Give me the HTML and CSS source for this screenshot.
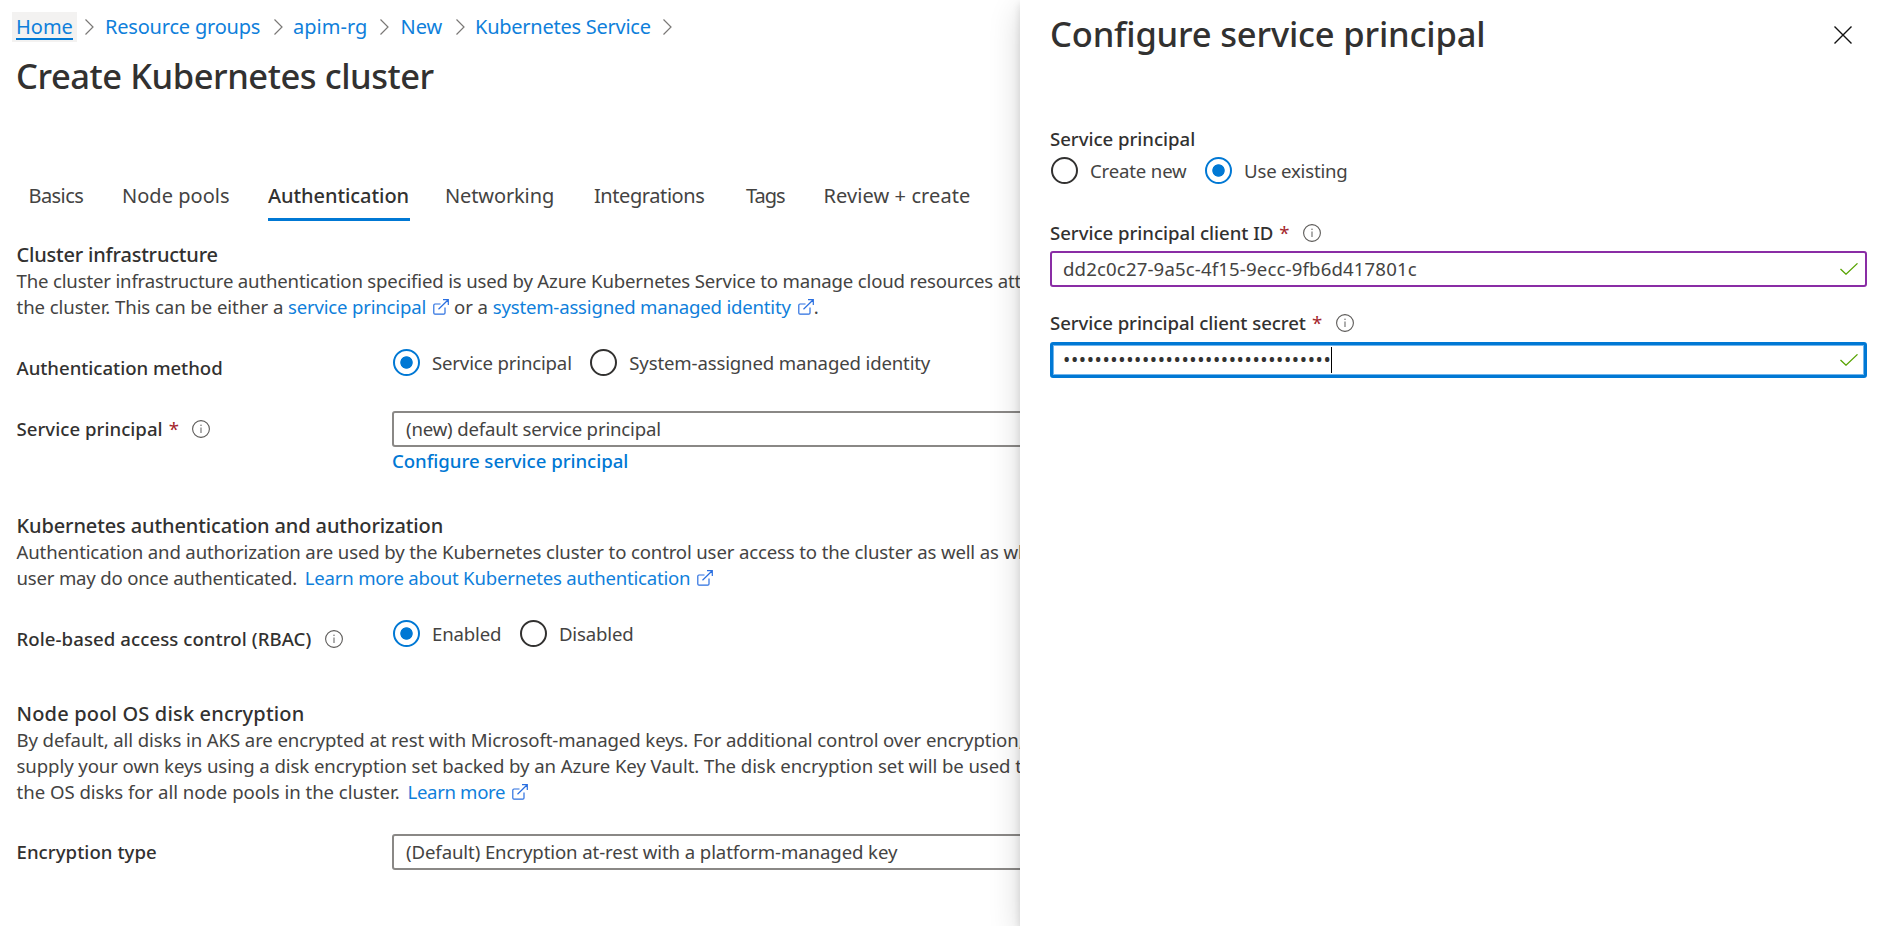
FILE: index.html
```
<!DOCTYPE html>
<html lang="en"><head><meta charset="utf-8"><title>Create Kubernetes cluster</title><link rel="stylesheet" href="styles.css"></head>
<body>
<svg class="defs" aria-hidden="true">
<symbol id="chev" viewBox="0 0 9 16"><path d="M.5.5 8 8 .5 15.500" fill="none" stroke="#7a7876" stroke-width="1.200"/></symbol>
<symbol id="ext" viewBox="0 0 16 16"><path d="M7.500 5H2Q.8 5 .8 6.200V14Q.8 15.200 2 15.200H10.800Q12 15.200 12 14V8.500M5.500 10.300 15.200.8M10 .7H15.300V6" fill="none" stroke="#2a6fe0" stroke-width="1.200"/></symbol>
<symbol id="info" viewBox="0 0 18 18"><circle cx="9" cy="9" r="8.400" fill="none" stroke="#5c5a58" stroke-width="1.100"/><path d="M9 7.500V13" stroke="#777" stroke-width="1.200"/><circle cx="9" cy="5.300" r=".8" fill="#777"/></symbol>
<symbol id="check" viewBox="0 0 18 12"><path d="M.5 6 6 11.200 17.500.4" fill="none" stroke="#57a300" stroke-width="1.300"/></symbol>
</svg>
<div class="app">
<main class="blade">
<nav class="crumbs">
<a class="home"><span>Home</span></a><svg class="chev"><use href="#chev"/></svg>
<a class="k20">Resource groups</a><svg class="chev"><use href="#chev"/></svg>
<a class="p03">apim-rg</a><svg class="chev"><use href="#chev"/></svg>
<a class="k03">New</a><svg class="chev"><use href="#chev"/></svg>
<a class="k25">Kubernetes Service</a><svg class="chev"><use href="#chev"/></svg>
</nav>
<h1 class="title k45">Create Kubernetes cluster</h1>
<div class="tabs">
<a class="k58">Basics</a><a class="p03">Node pools</a><a class="active k07">Authentication</a><a class="k12">Networking</a><a class="k42">Integrations</a><a class="k98">Tags</a><a class="p09">Review + create</a>
</div>
<section class="infra">
<h2 class="k20">Cluster infrastructure</h2>
<p class="k17">The cluster infrastructure authentication specified is used by Azure Kubernetes Service to manage cloud resources attached to</p>
<p class="k07">the cluster. This can be either a <a class="k20">service principal</a><svg class="ext"><use href="#ext"/></svg>or a <a class="k20">system-assigned managed identity</a><svg class="ext end"><use href="#ext"/></svg>.</p>
<div class="row auth"><div class="label"><b class="k03">Authentication method</b></div>
<div class="radios"><i class="radio on"></i><span class="rt k17">Service principal</span><i class="radio"></i><span class="rt k15">System-assigned managed identity</span></div></div>
<div class="row sp"><div class="label"><b class="p03">Service principal</b><em>*</em><svg class="info"><use href="#info"/></svg></div>
<div class="field"><div class="box"><span class="k17">(new) default service principal</span></div><a class="cfg k03">Configure service principal</a></div></div>
</section>
<section class="rbac">
<h2 class="k12">Kubernetes authentication and authorization</h2>
<p class="k15">Authentication and authorization are used by the Kubernetes cluster to control user access to the cluster as well as what the</p>
<p><span class="k20">user may do once authenticated.</span> <a class="more k22">Learn more about Kubernetes authentication</a><svg class="ext"><use href="#ext"/></svg></p>
<div class="row auth"><div class="label"><b class="p07">Role-based access control (RBAC)</b><svg class="info"><use href="#info"/></svg></div>
<div class="radios"><i class="radio on"></i><span class="rt k15">Enabled</span><i class="radio"></i><span class="rt k15">Disabled</span></div></div>
</section>
<section class="disk">
<h2 class="p17">Node pool OS disk encryption</h2>
<p class="k10">By default, all disks in AKS are encrypted at rest with Microsoft-managed keys. For additional control over encryption, you can</p>
<p class="k09">supply your own keys using a disk encryption set backed by an Azure Key Vault. The disk encryption set will be used to</p>
<p><span class="k03">the OS disks for all node pools in the cluster.</span> <a class="more k34">Learn more</a><svg class="ext"><use href="#ext"/></svg></p>
<div class="row enc"><div class="label"><b class="p05">Encryption type</b></div><div class="field"><div class="box"><span class="k10">(Default) Encryption at-rest with a platform-managed key</span></div></div></div>
</section>
</main>
<aside class="panel">
<header><h1 class="k17">Configure service principal</h1><svg class="close" viewBox="0 0 18 18"><path d="M.5.5 17.500 17.500M17.500.5.5 17.500" stroke="#111" stroke-width="1.400"/></svg></header>
<div class="label"><b class="k03">Service principal</b></div>
<div class="radios"><i class="radio"></i><span class="rt k17">Create new</span><i class="radio on"></i><span class="rt k20">Use existing</span></div>
<div class="label id"><b class="k03">Service principal client ID</b><em>*</em><svg class="info"><use href="#info"/></svg></div>
<div class="box valid"><span class="p15">dd2c0c27-9a5c-4f15-9ecc-9fb6d417801c</span><svg class="check"><use href="#check"/></svg></div>
<div class="label secret"><b class="k07">Service principal client secret</b><em>*</em><svg class="info"><use href="#info"/></svg></div>
<div class="box focus"><span class="dots">••••••••••••••••••••••••••••••••••</span><i class="caret"></i><svg class="check"><use href="#check"/></svg></div>
</aside>
</div>
</body></html>
```
FILE: styles.css
```
*{box-sizing:border-box}
body{margin:0;background:#fff;color:#323130;font:400 18.6px/26px "Noto Sans","Open Sans",sans-serif;overflow:hidden}
h1,h2,p{margin:0}
b,h1,h2{font-weight:500}
em{font-style:normal;color:#a4262c}
.defs{display:none}
svg{flex:none}
a{color:#0f7fdb}
.app{display:grid;grid-template-columns:1020px 1fr;height:926px}
.blade{min-width:0;overflow:hidden;white-space:nowrap;color:#444342}

/* Breadcrumb */
.crumbs{display:grid;grid-template-columns:72.5px 20.5px 168.5px 19.5px 87px 20.5px 55px 19.5px 188px 9px;padding:11px 0 0 12px;height:41px;align-items:center;font-size:20px;line-height:32px}
.home{justify-self:start;display:flex;width:65px;height:30px;padding-left:4px;background:#f3f2f1;line-height:29px}
.home span{height:28px;border-bottom:2px solid #0078d4;width:57px}
.chev{width:9px;height:16px}
.title,.panel h1{font-size:34.5px;line-height:44px}
.title{padding:13px 0 0 16px;height:118px;color:#323130}

/* Tabs */
.tabs{display:grid;grid-template-columns:93.5px 146px 177px 149px 152px 77.5px auto;margin:21px 0 0 28.5px;height:41px;font-size:20px;line-height:32px}
.tabs a{color:#444342;height:41px}
.tabs .active{justify-self:start;font-weight:500;color:#323130;width:142px;border-bottom:3px solid #0078d4}

/* Form sections */
section{padding-left:16.5px}
.infra{height:271px;margin-top:20px}
.rbac{height:188px}
h2{font-size:20px;line-height:27px;color:#323130}
.ext{width:16px;height:16px;margin:0 5px 0 7px;vertical-align:-1px}
.ext.end{margin-right:0}
.more{margin-left:3px}
.row{display:flex}
.label{flex:none;width:375.5px;display:flex;align-items:center;height:26px;color:#323130}
.label b{flex:none}
.label em{margin-left:6px}
.info{width:18px;height:18px;margin-left:13.5px}
.radios{display:flex;align-items:center;height:27px}
.radio{width:27px;height:27px;border:2px solid #323130;border-radius:50%;margin-right:12px;flex:none}
.radio.on{border-color:#0078d4;background:radial-gradient(circle,#0078d4 5.800px,transparent 6.600px)}
.rt{margin-right:18.5px;white-space:nowrap;color:#444342}
.auth{padding-top:29px}
.auth .label{margin-top:6px}
.auth .radios{padding-left:1px}
.sp{padding-top:30px}
.sp .label{margin-top:5px}
.field{flex:none;width:800px}
.box{height:36px;border:2px solid #8a8886;border-radius:3px;padding:0 12px;display:flex;align-items:center;color:#444342}
.cfg{display:block;margin-top:1px;font-weight:500;color:#0078d4}
.rbac .row{padding-top:29px}
.enc{padding-top:29px}
.enc .label{margin-top:5px}

/* Side panel */
.panel{background:#fff;box-shadow:0 10px 30px rgba(0,0,0,.16),0 4px 8px rgba(0,0,0,.12);padding:12px 22px 0 30px;position:relative}
.panel header{display:flex;justify-content:space-between;height:114px}
.close{width:18px;height:18px;margin:14px 15px 0 0}
.panel .label{width:auto}
.panel .radios{margin-top:5px;padding-left:1px}
.panel .id{margin-top:36px}
.panel .secret{margin-top:23px}
.panel .box{margin-top:5px}
.panel .box.valid{border-color:#8a2da5;padding-left:11px}
.panel .focus{margin-top:6px;border:3px solid #0078d4;box-shadow:inset 0 0 0 1px #71b5ec;padding:0 11px 0 10px;color:#323130}
.dots{font-size:19.5px;letter-spacing:.56px}
.caret{width:1px;height:26px;background:#000}
.check{width:18px;height:12px;margin:0 -5px 0 auto}

/* Tracking adjustments */
.k03{letter-spacing:-.03px}
.k07{letter-spacing:-.07px}
.k09{letter-spacing:-.085px}
.k10{letter-spacing:-.1px}
.k12{letter-spacing:-.12px}
.k15{letter-spacing:-.15px}
.k17{letter-spacing:-.17px}
.k20{letter-spacing:-.2px}
.k22{letter-spacing:-.22px}
.k25{letter-spacing:-.25px}
.k34{letter-spacing:-.34px}
.k42{letter-spacing:-.42px}
.k45{letter-spacing:-.45px}
.k58{letter-spacing:-.58px}
.k98{letter-spacing:-.98px}
.p03{letter-spacing:.03px}
.p05{letter-spacing:.05px}
.p07{letter-spacing:.07px}
.p09{letter-spacing:.09px}
.p15{letter-spacing:.15px}
.p17{letter-spacing:.17px}
```
